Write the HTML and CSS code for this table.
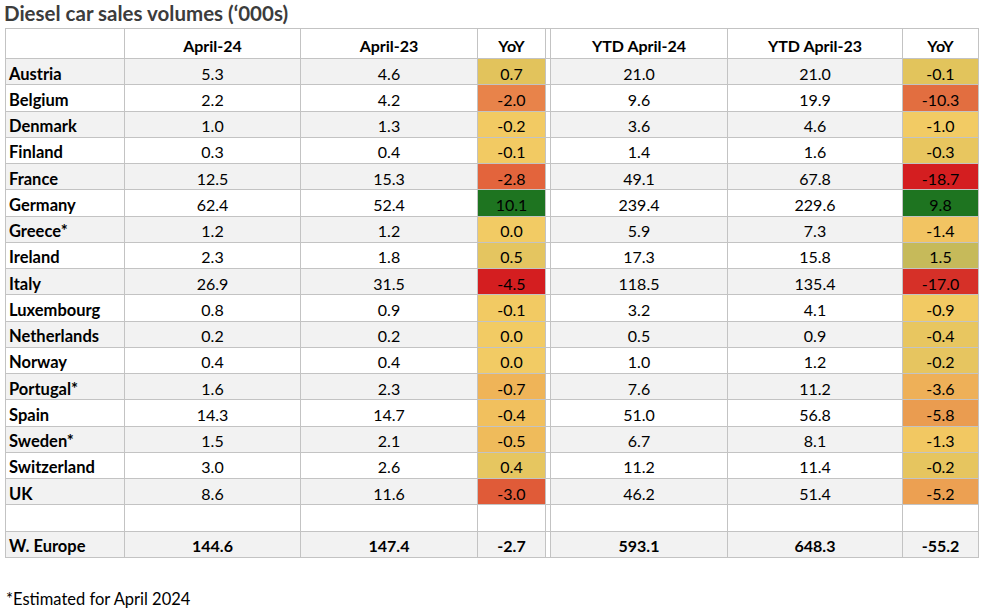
FILE: index.html
```html
<!DOCTYPE html>
<html>
<head>
<meta charset="utf-8">
<link rel="stylesheet" href="styles.css">
</head>
<body>
<h1 class="title">Diesel car sales volumes (‘000s)</h1>
<table class="sales">
<colgroup>
<col class="c-country"><col class="c-val"><col class="c-val2"><col class="c-yoy"><col class="c-gap"><col class="c-val2"><col class="c-val3"><col class="c-yoy2">
</colgroup>
<thead>
<tr><th></th><th>April-24</th><th>April-23</th><th>YoY</th><th class="gap"></th><th>YTD April-24</th><th>YTD April-23</th><th>YoY</th></tr>
</thead>
<tbody>
<tr class="alt"><td class="name">Austria</td><td>5.3</td><td>4.6</td><td class="y" style="background:#e2c35c">0.7</td><td class="gap"></td><td>21.0</td><td>21.0</td><td class="y" style="background:#e2c45c">-0.1</td></tr>
<tr><td class="name">Belgium</td><td>2.2</td><td>4.2</td><td class="y" style="background:#e8834a">-2.0</td><td class="gap"></td><td>9.6</td><td>19.9</td><td class="y" style="background:#e26e40">-10.3</td></tr>
<tr class="alt"><td class="name">Denmark</td><td>1.0</td><td>1.3</td><td class="y" style="background:#f2ca63">-0.2</td><td class="gap"></td><td>3.6</td><td>4.6</td><td class="y" style="background:#f2cb64">-1.0</td></tr>
<tr><td class="name">Finland</td><td>0.3</td><td>0.4</td><td class="y" style="background:#f2ca63">-0.1</td><td class="gap"></td><td>1.4</td><td>1.6</td><td class="y" style="background:#e8c65f">-0.3</td></tr>
<tr class="alt"><td class="name">France</td><td>12.5</td><td>15.3</td><td class="y" style="background:#e3643c">-2.8</td><td class="gap"></td><td>49.1</td><td>67.8</td><td class="y" style="background:#d41e20">-18.7</td></tr>
<tr><td class="name">Germany</td><td>62.4</td><td>52.4</td><td class="y" style="background:#1e7420">10.1</td><td class="gap"></td><td>239.4</td><td>229.6</td><td class="y" style="background:#1e7420">9.8</td></tr>
<tr class="alt"><td class="name">Greece*</td><td>1.2</td><td>1.2</td><td class="y" style="background:#f2cb64">0.0</td><td class="gap"></td><td>5.9</td><td>7.3</td><td class="y" style="background:#f2c462">-1.4</td></tr>
<tr><td class="name">Ireland</td><td>2.3</td><td>1.8</td><td class="y" style="background:#e4c560">0.5</td><td class="gap"></td><td>17.3</td><td>15.8</td><td class="y" style="background:#c6ba5a">1.5</td></tr>
<tr class="alt"><td class="name">Italy</td><td>26.9</td><td>31.5</td><td class="y" style="background:#d41e20">-4.5</td><td class="gap"></td><td>118.5</td><td>135.4</td><td class="y" style="background:#d63028">-17.0</td></tr>
<tr><td class="name">Luxembourg</td><td>0.8</td><td>0.9</td><td class="y" style="background:#f2ca63">-0.1</td><td class="gap"></td><td>3.2</td><td>4.1</td><td class="y" style="background:#f2ca63">-0.9</td></tr>
<tr class="alt"><td class="name">Netherlands</td><td>0.2</td><td>0.2</td><td class="y" style="background:#f2cb64">0.0</td><td class="gap"></td><td>0.5</td><td>0.9</td><td class="y" style="background:#e8c660">-0.4</td></tr>
<tr><td class="name">Norway</td><td>0.4</td><td>0.4</td><td class="y" style="background:#f2cb64">0.0</td><td class="gap"></td><td>1.0</td><td>1.2</td><td class="y" style="background:#e6c560">-0.2</td></tr>
<tr class="alt"><td class="name">Portugal*</td><td>1.6</td><td>2.3</td><td class="y" style="background:#efb458">-0.7</td><td class="gap"></td><td>7.6</td><td>11.2</td><td class="y" style="background:#eeb058">-3.6</td></tr>
<tr><td class="name">Spain</td><td>14.3</td><td>14.7</td><td class="y" style="background:#f1c05e">-0.4</td><td class="gap"></td><td>51.0</td><td>56.8</td><td class="y" style="background:#ea9c50">-5.8</td></tr>
<tr class="alt"><td class="name">Sweden*</td><td>1.5</td><td>2.1</td><td class="y" style="background:#efbb5b">-0.5</td><td class="gap"></td><td>6.7</td><td>8.1</td><td class="y" style="background:#f2c862">-1.3</td></tr>
<tr><td class="name">Switzerland</td><td>3.0</td><td>2.6</td><td class="y" style="background:#e6c660">0.4</td><td class="gap"></td><td>11.2</td><td>11.4</td><td class="y" style="background:#e6c55f">-0.2</td></tr>
<tr class="alt"><td class="name">UK</td><td>8.6</td><td>11.6</td><td class="y" style="background:#e05b38">-3.0</td><td class="gap"></td><td>46.2</td><td>51.4</td><td class="y" style="background:#eca052">-5.2</td></tr>
<tr><td class="name"></td><td></td><td></td><td></td><td class="gap"></td><td></td><td></td><td></td></tr>
<tr class="alt total"><td class="name">W. Europe</td><td>144.6</td><td>147.4</td><td>-2.7</td><td class="gap"></td><td>593.1</td><td>648.3</td><td>-55.2</td></tr>
</tbody>
</table>
<p class="note">*Estimated for April 2024</p>
</body>
</html>
```
FILE: styles.css
```css
html, body {
  margin: 0;
  padding: 0;
  background: #ffffff;
}
body {
  font-family: Lato, "Open Sans", sans-serif;
  color: #000000;
  width: 987px;
  height: 611px;
  overflow: hidden;
}
.title {
  margin: 0;
  padding: 1px 0 0 4px;
  height: 28px;
  box-sizing: border-box;
  font-size: 20.5px;
  font-weight: 700;
  color: #3c3c3c;
  line-height: 24px;
}
.sales {
  margin-left: 5px;
  border-collapse: collapse;
  table-layout: fixed;
  width: 974px;
  font-size: 16px;
}
.c-country { width: 119px; }
.c-val { width: 176px; }
.c-val2 { width: 177px; }
.c-val3 { width: 175px; }
.c-yoy { width: 68px; }
.c-gap { width: 5px; }
.c-yoy2 { width: 76px; }
.sales th, .sales td {
  border: 1px solid #c3c3c3;
  padding: 4px 0 0 0;
  text-align: center;
  white-space: nowrap;
  overflow: hidden;
  line-height: 20px;
}
.sales thead tr {
  height: 30px;
}
.sales th {
  font-weight: 700;
  background: #ffffff;
}
.sales tbody tr {
  height: 26.25px;
  background: #ffffff;
}
.sales tbody tr.alt {
  background: #f2f2f2;
}
.sales td.name {
  text-align: left;
  padding-left: 3px;
  font-weight: 700;
  font-size: 16.5px;
}
.sales td.gap, .sales th.gap {
  background: #ffffff;
}
.sales tr.total td {
  font-weight: 700;
}
.note {
  margin: 0;
  padding: 31px 0 0 6px;
  font-size: 16.5px;
  line-height: 20px;
}
```
